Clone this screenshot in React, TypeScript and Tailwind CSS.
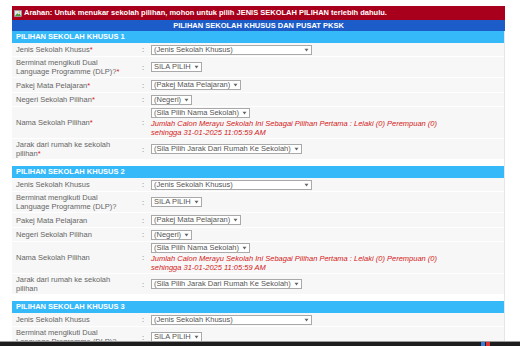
import React from "react";

const font = { fontFamily: '"Liberation Sans", Arial, sans-serif' };

function Sel({ text, w }: { text: string; w?: string }) {
  return (
    <span
      className={`inline-flex items-center h-[10px] border border-[#a9a9a9] bg-white text-[#555] text-[7.5px] leading-none pl-[2px] pr-[2px] gap-[3px] ${w ?? ""}`}
    >
      <span className="flex-1 whitespace-nowrap">{text}</span>
      <svg width="5" height="4" viewBox="0 0 5 4" className="shrink-0">
        <path d="M0.5 0.8 L4.5 0.8 L2.5 3.4 Z" fill="#666" />
      </svg>
    </span>
  );
}

function Row({
  label,
  req,
  h,
  children,
}: {
  label: React.ReactNode;
  req: boolean;
  h: string;
  children: React.ReactNode;
}) {
  return (
    <div className={`flex items-center bg-[#f7f7f7] border-b border-white ${h}`}>
      <div className="w-[128px] pl-[4px] text-[7.5px] leading-[9px] text-[#666]">
        {label}
        {req && <span className="text-[#e0181e]">*</span>}
      </div>
      <div className="w-[11px] pl-[2px] text-[7.5px] leading-[9px] text-[#666]">:</div>
      <div className="flex-1 flex items-center leading-none">{children}</div>
    </div>
  );
}

function Section({ n, req }: { n: number; req: boolean }) {
  return (
    <div className="flex flex-col">
      <div className="h-[12px] bg-[#36b9f9] flex items-center pl-[4px] text-white font-bold text-[7.5px]">
        PILIHAN SEKOLAH KHUSUS {n}
      </div>
      <Row label="Jenis Sekolah Khusus" req={req} h="h-[14px]">
        <Sel text="(Jenis Sekolah Khusus)" w="w-[161px]" />
      </Row>
      <Row
        label={
          <>
            Berminat mengikuti Dual
            <br />
            Language Programme (DLP)?
          </>
        }
        req={req}
        h="h-[21px]"
      >
        <Sel text="SILA PILIH" />
      </Row>
      <Row label="Pakej Mata Pelajaran" req={req} h="h-[15px]">
        <Sel text="(Pakej Mata Pelajaran)" />
      </Row>
      <Row label="Negeri Sekolah Pilihan" req={req} h="h-[14px]">
        <Sel text="(Negeri)" />
      </Row>
      <Row label="Nama Sekolah Pilihan" req={req} h="h-[32px]">
        <div className="flex flex-col items-start">
          <div className="flex mb-[1px]">
            <Sel text="(Sila Pilih Nama Sekolah)" />
          </div>
          <div className="text-[7.5px] leading-[9px] italic text-[#d42020]">
            Jumlah Calon Merayu Sekolah Ini Sebagai Pilihan Pertama : Lelaki (0) Perempuan (0)
            <br />
            sehingga 31-01-2025 11:05:59 AM
          </div>
        </div>
      </Row>
      <Row
        label={
          <>
            Jarak dari rumah ke sekolah
            <br />
            pilihan
          </>
        }
        req={req}
        h="h-[21px]"
      >
        <Sel text="(Sila Pilih Jarak Dari Rumah Ke Sekolah)" />
      </Row>
      <div className="h-[6px] bg-white" />
    </div>
  );
}

export default function App() {
  return (
    <div className="w-[520px] h-[346px] overflow-hidden bg-white relative" style={font}>
      <div className="pt-[6px] pl-[12px] w-[505px]">
        <div className="h-[14px] bg-[#a8001c] flex items-center pl-[2px] gap-[2px] text-white font-bold text-[7.5px]">
          <svg width="8" height="7" viewBox="0 0 8 7">
            <rect x="0.5" y="0.5" width="7" height="6" fill="#dfe8ef" stroke="#8aa" strokeWidth="0.6" />
            <path d="M1 6 L3.2 3.2 L4.6 4.6 L5.6 3.6 L7 6 Z" fill="#4a9a3a" />
            <circle cx="5.5" cy="2" r="0.8" fill="#e8b020" />
          </svg>
          <span>
            Arahan: Untuk menukar sekolah pilihan, mohon untuk pilih JENIS SEKOLAH PILIHAN terlebih dahulu.
          </span>
        </div>
        <div className="h-[11px] bg-[#1c5cc8] flex items-center justify-center text-white font-bold text-[7.5px]">
          PILIHAN SEKOLAH KHUSUS DAN PUSAT PKSK
        </div>
        <div className="border-r border-[#e6e6e6]">
          <Section n={1} req={true} />
          <Section n={2} req={false} />
          <Section n={3} req={false} />
        </div>
      </div>
      <div className="fixed left-0 right-0 bottom-0 h-[5px] bg-[#1d1d1d] border-t border-[#9a9a9a] flex items-center justify-end pr-[30px] gap-[1px]">
        <span className="w-[4px] h-[4px] bg-[#3a7bd5]" />
        <span className="w-[4px] h-[4px] bg-[#d33]" />
      </div>
    </div>
  );
}
